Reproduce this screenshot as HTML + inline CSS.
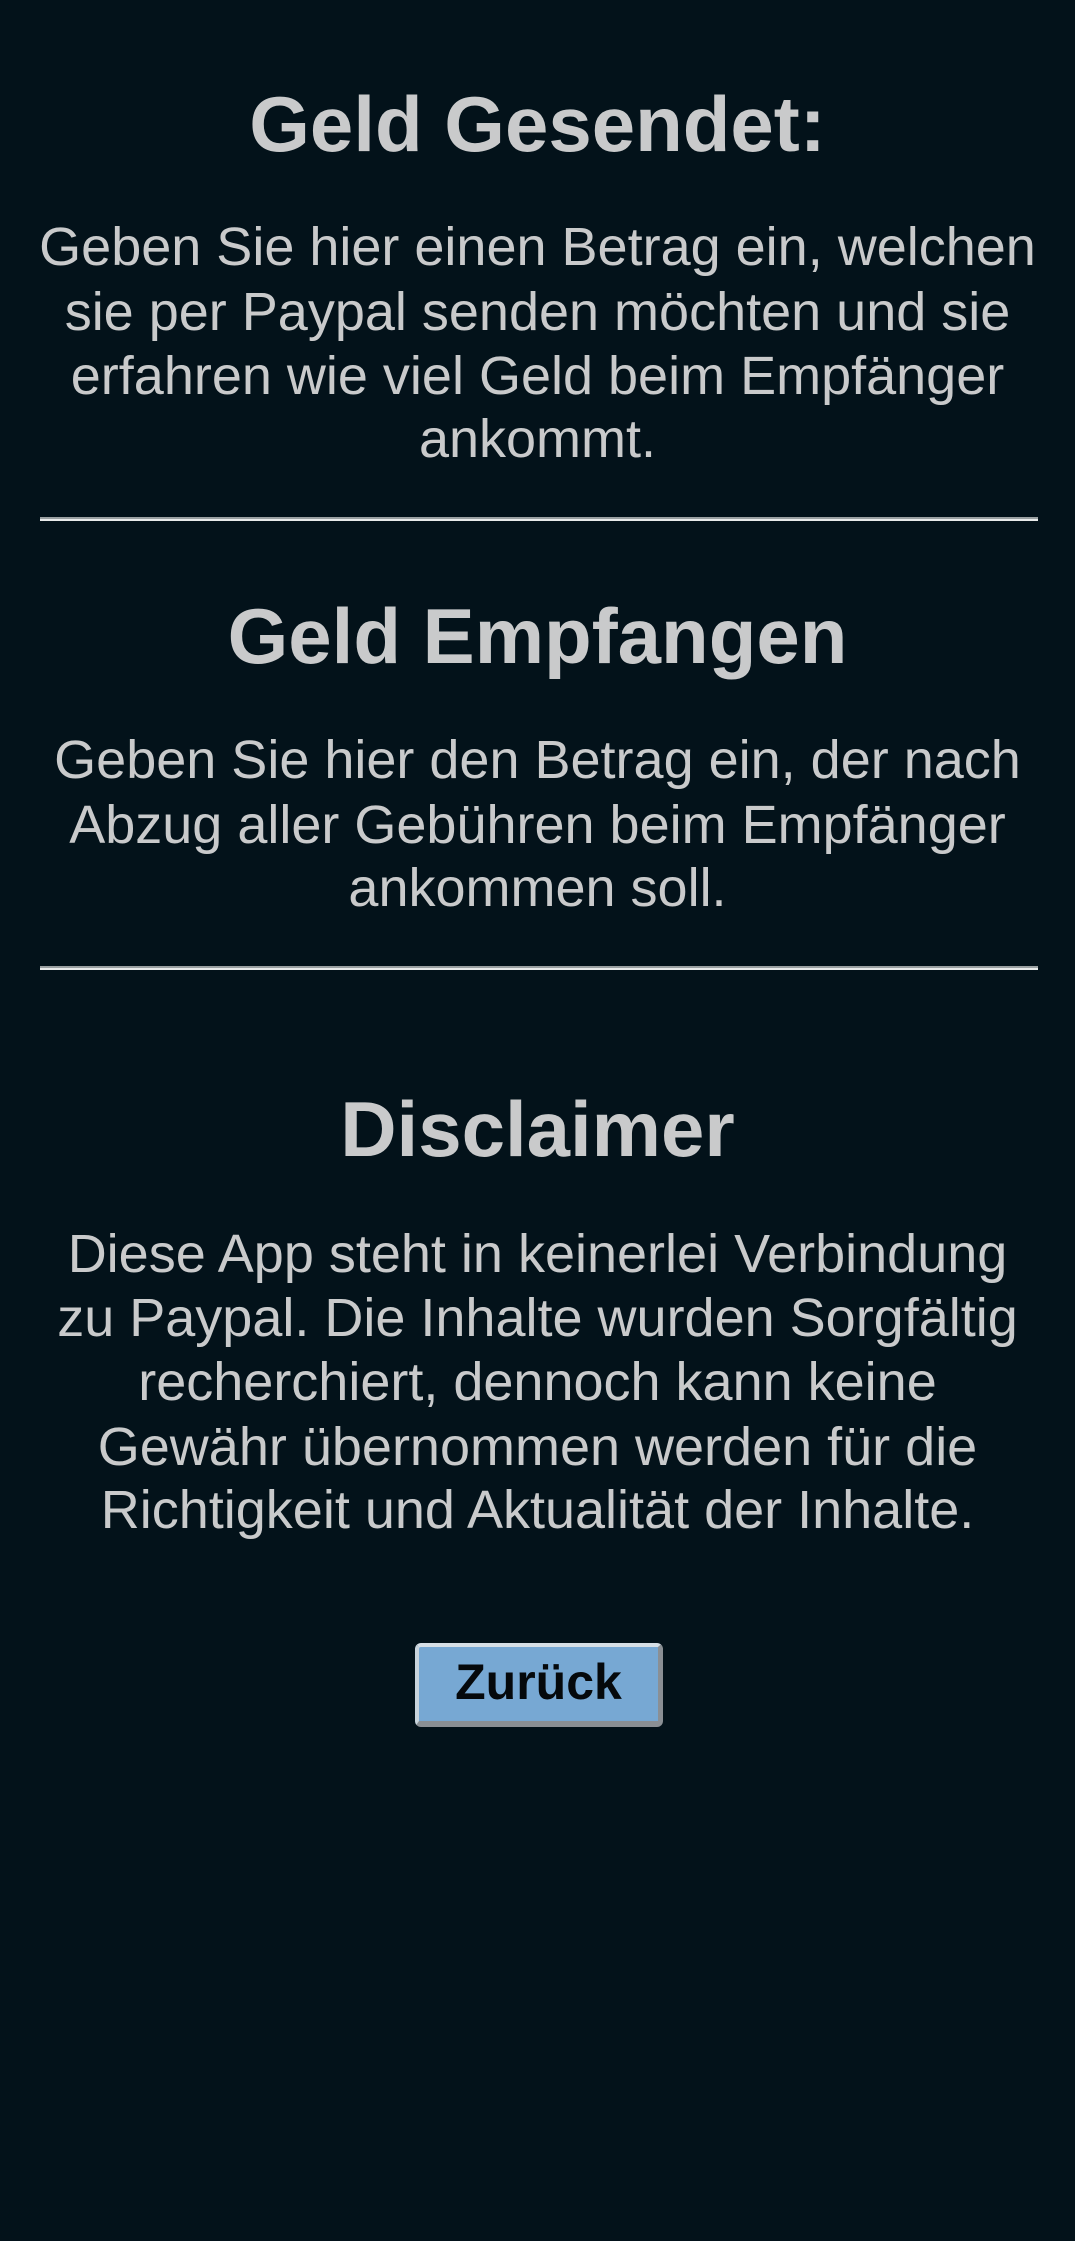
<!DOCTYPE html>
<html><head><meta charset="utf-8"><style>
html,body{margin:0;padding:0}
body{width:1075px;height:2241px;background:#03121a;position:relative;overflow:hidden;font-family:"Liberation Sans",Arial,sans-serif;color:#c9cacb}
.l{position:absolute;left:0;width:1075px;text-align:center;white-space:nowrap}
.h{font-weight:bold;font-size:78px;line-height:90px}
.b{font-size:54px;line-height:64px}
.hr{position:absolute;left:40px;width:998px;height:2px;background:#9aa0a2;border-bottom:2px solid #e8eaea}
.btn{position:absolute;left:415px;top:1643px;width:248px;height:84px;box-sizing:border-box;background:#77a8d3;border-radius:6px;border-top:4px solid #d6dfe6;border-left:4px solid #c9d4dc;border-right:5px solid #8a8f94;border-bottom:6px solid #8a8f94;text-align:center;font-weight:bold;font-size:50px;line-height:70px;color:#05090c}
</style></head><body>
<div class="l h" style="top:79px">Geld Gesendet:</div>
<div class="l b" style="top:215px">Geben Sie hier einen Betrag ein, welchen</div>
<div class="l b" style="top:280px">sie per Paypal senden möchten und sie</div>
<div class="l b" style="top:344px">erfahren wie viel Geld beim Empfänger</div>
<div class="l b" style="top:407px">ankommt.</div>
<div class="hr" style="top:517px"></div>
<div class="l h" style="top:591px">Geld Empfangen</div>
<div class="l b" style="top:728px">Geben Sie hier den Betrag ein, der nach</div>
<div class="l b" style="top:793px">Abzug aller Gebühren beim Empfänger</div>
<div class="l b" style="top:856px">ankommen soll.</div>
<div class="hr" style="top:966px"></div>
<div class="l h" style="top:1084px">Disclaimer</div>
<div class="l b" style="top:1222px">Diese App steht in keinerlei Verbindung</div>
<div class="l b" style="top:1286px">zu Paypal. Die Inhalte wurden Sorgfältig</div>
<div class="l b" style="top:1350px">recherchiert, dennoch kann keine</div>
<div class="l b" style="top:1415px">Gewähr übernommen werden für die</div>
<div class="l b" style="top:1478px">Richtigkeit und Aktualität der Inhalte.</div>
<div class="btn">Zurück</div>
</body></html>
